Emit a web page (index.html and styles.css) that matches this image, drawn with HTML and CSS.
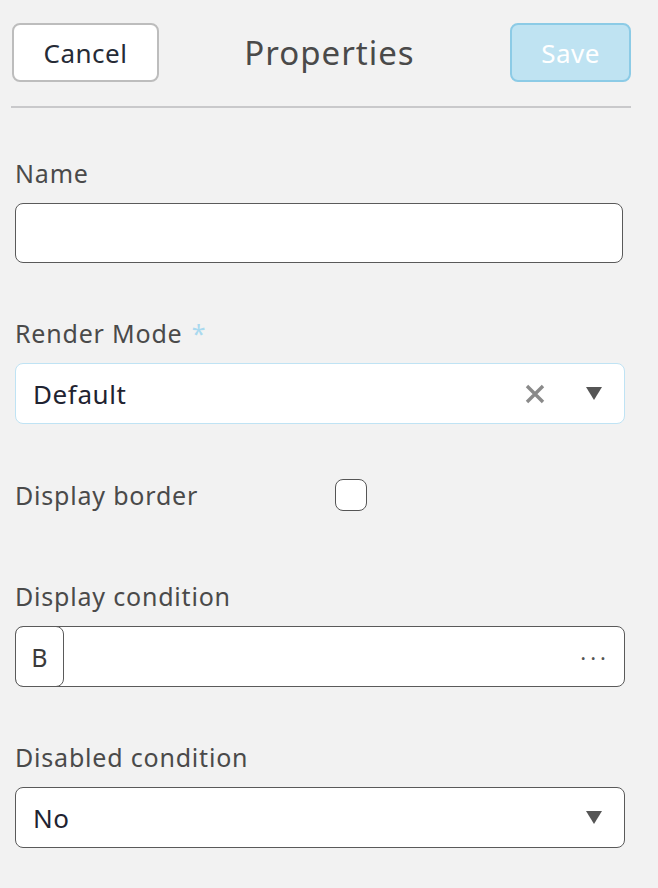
FILE: index.html
```html
<!DOCTYPE html>
<html>
<head>
<meta charset="utf-8">
<link rel="stylesheet" href="styles.css">
</head>
<body>
<div class="panel">
  <header class="header">
    <button class="btn btn-cancel">Cancel</button>
    <h1 class="title">Properties</h1>
    <button class="btn btn-save">Save</button>
  </header>
  <div class="divider"></div>

  <div class="field field-name">
    <label class="label">Name</label>
    <div class="input"></div>
  </div>

  <div class="field field-render">
    <label class="label">Render Mode <span class="req">*</span></label>
    <div class="input select select-focus">
      <span class="value">Default</span>
      <span class="clear">
        <svg width="20" height="20" viewBox="0 0 20 20"><path d="M2 2 L18 18 M18 2 L2 18" stroke="#8a8a8a" stroke-width="3.4" stroke-linecap="butt"/></svg>
      </span>
      <span class="arrow"><svg width="16" height="13" viewBox="0 0 16 13"><path d="M0 0 H16 L8 13 Z" fill="#555"/></svg></span>
    </div>
  </div>

  <div class="field field-check">
    <label class="label">Display border</label>
    <span class="checkbox"></span>
  </div>

  <div class="field field-cond">
    <label class="label">Display condition</label>
    <div class="input cond">
      <span class="badge">B</span>
      <span class="dots">&middot;&middot;&middot;</span>
    </div>
  </div>

  <div class="field field-disabled">
    <label class="label">Disabled condition</label>
    <div class="input select">
      <span class="value">No</span>
      <span class="arrow"><svg width="16" height="13" viewBox="0 0 16 13"><path d="M0 0 H16 L8 13 Z" fill="#555"/></svg></span>
    </div>
  </div>
</div>
</body>
</html>
```

FILE: styles.css
```css
* { box-sizing: border-box; }
html, body { margin: 0; padding: 0; background: #f2f2f2; }
body {
  font-family: "Noto Sans", "Open Sans", sans-serif;
  color: #4a4a4a;
  width: 658px;
  height: 888px;
  overflow: hidden;
}
.panel { padding: 23px 27px 0 11px; }
.header {
  display: flex;
  align-items: center;
  justify-content: space-between;
  padding-left: 1px;
}
.btn {
  height: 59px;
  border-radius: 8px;
  font-family: inherit;
  font-size: 26px;
  letter-spacing: 0.5px;
  padding: 0;
}
.btn-cancel {
  width: 147px;
  background: #fff;
  border: 2px solid #bdbdbd;
  color: #262b36;
}
.btn-save {
  width: 121px;
  background: #bfe3f2;
  border: 2px solid #8ccbe6;
  color: #fff;
}
.title {
  margin: 0;
  font-weight: 400;
  font-size: 33px;
  letter-spacing: 1px;
  color: #4a4a4a;
  padding-right: 10px;
}
.divider {
  height: 2px;
  background: #c9c9cb;
  margin-top: 24px;
}
.field { padding-left: 4px; }
.label {
  display: block;
  font-size: 25px;
  letter-spacing: 0.8px;
  line-height: 30px;
  color: #4a4a4a;
}
.req { color: #a9d9ef; margin-left: 2px; }
.field-name { margin-top: 50px; width: 612px; }
.field-name .label { margin-bottom: 15px; }
.input {
  height: 60px;
  background: #fff;
  border: 1px solid #5a5a5a;
  border-radius: 8px;
}
.field-render { margin-top: 55px; width: 614px; }
.field-render .label { margin-bottom: 15px; }
.select {
  display: flex;
  align-items: center;
  padding: 0 22px 0 17px;
}
.select-focus { border-color: #bfe3f4; height: 61px; }
.value {
  flex: 1;
  font-size: 26px;
  letter-spacing: 0.6px;
  color: #1f2331;
}
.clear { display: flex; margin-right: 41px; }
.arrow { display: flex; }
.field-check {
  display: flex;
  align-items: center;
  margin-top: 55px;
}
.field-check .label { width: 320px; }
.checkbox {
  width: 32px;
  height: 32px;
  border: 1px solid #555;
  border-radius: 8px;
  background: #fff;
}
.field-cond { margin-top: 70px; width: 614px; }
.field-cond .label { margin-bottom: 15px; }
.cond {
  display: flex;
  align-items: center;
  height: 61px;
  overflow: hidden;
}
.badge {
  width: 49px;
  height: 61px;
  margin: -1px 0 -1px -1px;
  border: 1px solid #5a5a5a;
  border-radius: 8px;
  display: flex;
  align-items: center;
  justify-content: center;
  font-size: 25px;
  color: #3a3a3a;
  flex: none;
}
.dots {
  margin-left: auto;
  margin-right: 14px;
  font-size: 22px;
  letter-spacing: 4px;
  color: #555;
}
.field-disabled { margin-top: 55px; width: 614px; }
.field-disabled .label { margin-bottom: 15px; }
.field-disabled .select { height: 61px; }
```
